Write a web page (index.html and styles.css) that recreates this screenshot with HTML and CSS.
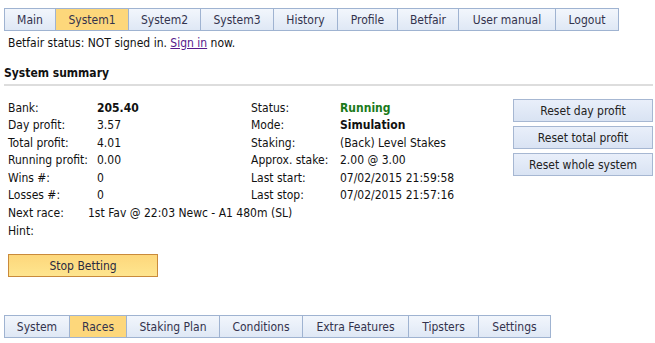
FILE: index.html
```html
<!DOCTYPE html>
<html lang="en">
<head>
    <meta charset="UTF-8">
    <title>System1</title>
    <link rel="stylesheet" href="styles.css">
</head>
<body>
    <!-- Top menu -->
    <div class="tabs top-tabs">
        <a class="tab" style="width:51px">Main</a>
        <a class="tab active" style="width:73px">System1</a>
        <a class="tab" style="width:72px">System2</a>
        <a class="tab" style="width:73px">System3</a>
        <a class="tab" style="width:64px">History</a>
        <a class="tab" style="width:60px">Profile</a>
        <a class="tab" style="width:61px">Betfair</a>
        <a class="tab" style="width:97px">User manual</a>
        <a class="tab" style="width:63px">Logout</a>
    </div>

    <div class="status-line">Betfair status: NOT signed in. <a href="#" class="link">Sign in</a> now.</div>

    <h2 class="section-title">System summary</h2>

    <div class="summary">
        <div class="col col-left">
            <div class="row"><span class="lbl">Bank:</span><span class="val bold">205.40</span></div>
            <div class="row"><span class="lbl">Day profit:</span><span class="val">3.57</span></div>
            <div class="row"><span class="lbl">Total profit:</span><span class="val">4.01</span></div>
            <div class="row"><span class="lbl">Running profit:</span><span class="val">0.00</span></div>
            <div class="row"><span class="lbl">Wins #:</span><span class="val">0</span></div>
            <div class="row"><span class="lbl">Losses #:</span><span class="val">0</span></div>
        </div>
        <div class="col col-mid">
            <div class="row"><span class="lbl">Status:</span><span class="val bold green">Running</span></div>
            <div class="row"><span class="lbl">Mode:</span><span class="val bold">Simulation</span></div>
            <div class="row"><span class="lbl">Staking:</span><span class="val">(Back) Level Stakes</span></div>
            <div class="row"><span class="lbl">Approx. stake:</span><span class="val">2.00 @ 3.00</span></div>
            <div class="row"><span class="lbl">Last start:</span><span class="val">07/02/2015 21:59:58</span></div>
            <div class="row"><span class="lbl">Last stop:</span><span class="val">07/02/2015 21:57:16</span></div>
        </div>
        <div class="col col-btns">
            <button class="btn">Reset day profit</button>
            <button class="btn">Reset total profit</button>
            <button class="btn">Reset whole system</button>
        </div>
    </div>

    <div class="extra">
        <div class="row"><span class="lbl">Next race:</span><span class="val">1st Fav @ 22:03 Newc - A1 480m (SL)</span></div>
        <div class="row"><span class="lbl">Hint:</span><span class="val"></span></div>
    </div>

    <button class="btn btn-stop">Stop Betting</button>

    <!-- Bottom menu -->
    <div class="tabs bottom-tabs">
        <a class="tab" style="width:65px">System</a>
        <a class="tab active" style="width:57px">Races</a>
        <a class="tab" style="width:93px">Staking Plan</a>
        <a class="tab" style="width:83px">Conditions</a>
        <a class="tab" style="width:106px">Extra Features</a>
        <a class="tab" style="width:70px">Tipsters</a>
        <a class="tab" style="width:72px">Settings</a>
    </div>
</body>
</html>
```

FILE: styles.css
```css
body {
    font-family: 'DejaVu Sans Condensed', 'DejaVu Sans', sans-serif;
    font-size: 12px;
    color: #111;
    background: #fff;
    margin: 0;
    padding: 8px 2px 0 4px;
}

/* Tabs */
.tabs {
    display: flex;
    border: 1px solid #9fb3d1;
    width: max-content;
}

.tab {
    display: flex;
    align-items: center;
    justify-content: center;
    box-sizing: border-box;
    height: 21px;
    color: #33334d;
    background: linear-gradient(#f2f6fc, #dfe8f5);
    border-left: 1px solid #9fb3d1;
    text-decoration: none;
    cursor: pointer;
}

.tab:first-child {
    border-left: none;
}

.tab.active {
    background: #fdd77b;
}

.top-tabs .tab:first-child {
    width: 50px !important;
}

.bottom-tabs .tab:first-child {
    width: 64px !important;
}

.status-line {
    margin: 3px 0 0 4px;
    height: 18px;
    line-height: 18px;
}

.link {
    color: #551a8b;
}

.section-title {
    font-size: 12px;
    font-weight: bold;
    margin: 14px 0 0 0;
    padding-bottom: 4px;
    border-bottom: 2px solid #ddd;
    width: 649px;
}

/* Summary */
.summary {
    display: flex;
    margin-top: 14px;
}

.row {
    display: flex;
    height: 17.4px;
    line-height: 17px;
}

.lbl {
    width: 89px;
    flex-shrink: 0;
}

.bold {
    font-weight: bold;
}

.green {
    color: #1a7a1a;
}

.col-left {
    padding-left: 4px;
    width: 243px;
}

.col-mid {
    width: 262px;
}

.col-btns {
    display: flex;
    flex-direction: column;
    gap: 4px;
    margin-top: -1px;
}

.btn {
    font-family: inherit;
    font-size: 12px;
    font-weight: normal;
    color: #222;
    width: 140px;
    height: 23px;
    border: 1px solid #a6b7d2;
    background: linear-gradient(#e9effa, #d9e3f3);
    cursor: pointer;
    padding: 0;
}

.extra {
    margin-top: 1px;
    padding-left: 4px;
}

.extra .lbl {
    width: 80px;
}

.btn-stop {
    display: block;
    margin: 14px 0 0 4px;
    width: 150px;
    height: 23px;
    color: #2a2a40;
    border: 1px solid #c98a3b;
    background: linear-gradient(#fdd77b, #fee58f);
}

.bottom-tabs {
    margin-top: 38px;
}
```
